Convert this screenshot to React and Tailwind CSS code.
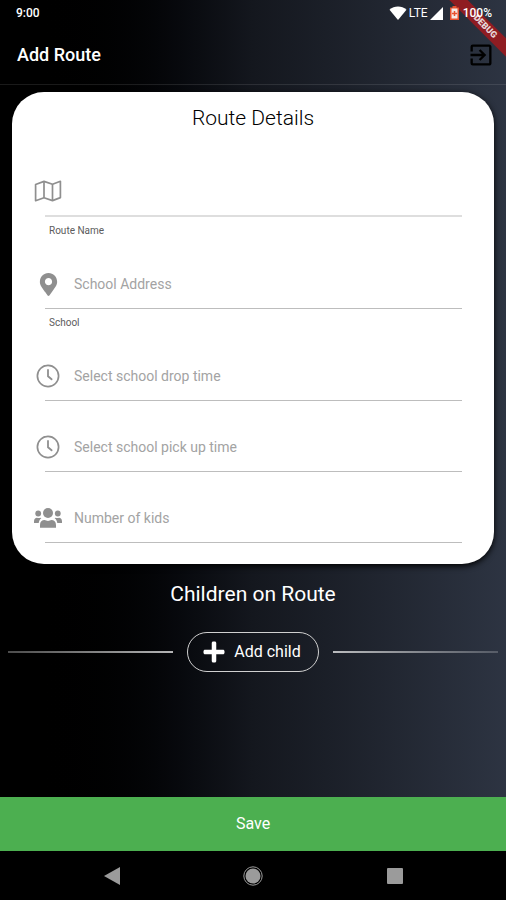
import React, { useState } from 'react'
import { FaMapMarkerAlt, FaPlus } from 'react-icons/fa'
import { MdExitToApp } from 'react-icons/md'

function MapIcon() {
    return (
        <svg width="28" height="22" viewBox="0 0 28 22" fill="none" stroke="currentColor" strokeWidth="1.7" strokeLinejoin="round">
            <path d="M1.600 4.500 10 1.400l8.500 2.900 7.900-3V17.600l-7.900 3-8.500-2.900-8.400 3z" />
            <path d="M10 1.400v16.300M18.500 4.300v16.300" />
        </svg>
    )
}

function ClockIcon() {
    return (
        <svg width="24" height="24" viewBox="0 0 24 24" fill="none" stroke="currentColor">
            <circle cx="12" cy="12" r="10.600" strokeWidth="1.700" />
            <path d="M12 6v6.300l3.600 3" strokeWidth="1.800" strokeLinecap="round" />
        </svg>
    )
}

function PeopleIcon() {
    return (
        <svg width="28" height="22" viewBox="0 0 28 22" fill="currentColor">
            <circle cx="14" cy="6" r="5" />
            <circle cx="4.200" cy="6.500" r="2.900" />
            <circle cx="23.800" cy="6.500" r="2.900" />
            <path d="M6 20.800V18c0-3 2-4.900 4.600-4.900.9.500 2.100.8 3.400.8s2.500-.3 3.400-.8c2.600 0 4.600 1.900 4.600 4.900v2.800z" />
            <path d="M0 16v-1.600C0 12 1.300 10.700 3 10.700c1 .5 2.300.5 3.300 0 .4.100.8.300 1.100.600C5.900 12.300 5 13.900 4.700 16z" />
            <path d="M28 16v-1.600c0-2.400-1.300-3.700-3-3.700-1 .5-2.300.5-3.300 0-.4.100-.8.300-1.100.600 1.500 1 2.400 2.600 2.700 4.700z" />
        </svg>
    )
}

const fields = [
    { name: "routeName", label: "Route Name", placeholder: "", caption: "Route Name", icon: <MapIcon />, active: true },
    { name: "school", label: "School", placeholder: "School Address", caption: "School", icon: <FaMapMarkerAlt size={23} /> },
    { name: "dropTime", label: "Drop time", placeholder: "Select school drop time", icon: <ClockIcon /> },
    { name: "pickTime", label: "Pick up time", placeholder: "Select school pick up time", icon: <ClockIcon /> },
    { name: "kids", label: "Kids", placeholder: "Number of kids", icon: <PeopleIcon /> },
]

function StatusBar() {
    return (
        <div className="relative z-20 flex h-[26px] items-center justify-between pl-4 pr-[14px] text-xs font-medium">
            <span>9:00</span>
            <div className="flex items-center">
                <svg width="18" height="14" viewBox="0 0 18 14" fill="currentColor">
                    <path d="M9 14 0.500 3.800C3 1.600 5.800 0.500 9 0.500s6 1.100 8.500 3.300z" />
                </svg>
                <span className="ml-[2px] font-normal">LTE</span>
                <svg className="ml-[2px]" width="13" height="13" viewBox="0 0 13 13" fill="currentColor">
                    <path d="M13 0v13H0z" />
                </svg>
                <svg className="ml-[7px]" width="9" height="14" viewBox="0 0 9 14">
                    <path d="M2.500 0h4v1.500H9V14H0V1.500h2.500z" fill="#e8502f" />
                    <path d="M1.500 2.500h6v10h-6z" fill="#f4e9e6" />
                    <path d="M4.500 5v5M2 7.500h5" stroke="#e8502f" strokeWidth="1.500" />
                </svg>
                <span className="ml-1">100%</span>
            </div>
        </div>
    )
}

function DebugBanner() {
    return (
        <div className="pointer-events-none absolute right-0 top-0 z-10 h-[60px] w-[60px] overflow-hidden">
            <div className="absolute -right-[27px] top-[18px] h-[13px] w-[100px] rotate-45 bg-[#8f1c22] pl-[6px] text-center text-[9px] font-black leading-[13px] text-[#e6d6d8]">
                DEBUG
            </div>
        </div>
    )
}

function Field({ field, value, onChange }) {
    return (
        <div>
            <div className="flex h-12 items-center">
                <span className="flex w-7 shrink-0 justify-center text-[#8f8f8f]">{field.icon}</span>
                <input
                    id={field.name}
                    aria-label={field.label}
                    value={value}
                    onChange={onChange}
                    placeholder={field.placeholder}
                    className="h-full min-w-0 flex-1 bg-transparent pl-3 text-sm text-black outline-none placeholder:text-[#a3a3a3]"
                />
            </div>
            <div className={field.active ? "ml-[11px] border-t-2 border-[#dedede]" : "ml-[11px] border-t border-[#bdbdbd]"} />
            {field.caption && (
                <label htmlFor={field.name} className="block pl-[15px] pt-[6px] text-[10px] leading-[15px] text-[#5c5c5c]">
                    {field.caption}
                </label>
            )}
        </div>
    )
}

function App() {
    const [values, setValues] = useState({})

    const update = (name) => (e) => setValues({ ...values, [name]: e.target.value })

    return (
        <div className="relative flex min-h-screen flex-col overflow-hidden bg-linear-to-r from-black from-5% via-[#14171e] via-50% to-[#2d3442] font-['Roboto',sans-serif] text-white">
            <StatusBar />
            <DebugBanner />

            <header className="flex h-[59px] items-center justify-between border-b border-white/10 pl-[17px] pr-[11px]">
                <h1 className="text-lg font-medium">Add Route</h1>
                <button type="button" aria-label="Exit" className="text-black">
                    <MdExitToApp size={28} />
                </button>
            </header>

            <main className="flex flex-1 flex-col">
                {/* Route details */}
                <form className="mx-3 mt-[7px] rounded-[32px] bg-white pb-[21px] pl-[22px] pr-8 pt-3 text-black shadow-[0_2px_6px_#000]">
                    <h2 className="ml-[10px] text-center text-[21px] font-light leading-7">Route Details</h2>
                    <div className="mt-[35px] flex flex-col gap-[22px]">
                        {fields.map((field) => (
                            <Field
                                key={field.name}
                                field={field}
                                value={values[field.name] || ""}
                                onChange={update(field.name)}
                            />
                        ))}
                    </div>
                </form>

                {/* Children */}
                <h2 className="mt-4 text-center text-[21px] leading-7">Children on Route</h2>
                <div className="mt-6 flex items-center gap-[14px] px-2">
                    <div className="h-[2px] flex-1 bg-linear-to-r from-white/30 to-white/70" />
                    <button type="button" className="flex h-10 items-center gap-2 rounded-full border border-[#d0d0d0] pl-[14px] pr-[17px] text-base">
                        <FaPlus size={24} />
                        Add child
                    </button>
                    <div className="h-[2px] flex-1 bg-linear-to-r from-white/70 to-white/20" />
                </div>
            </main>

            <button type="button" className="h-[54px] w-full bg-[#4caf50] text-base">Save</button>

            {/* System navigation */}
            <nav className="grid h-[49px] grid-cols-[1fr_60px_1fr] items-center bg-black text-[#9b9b9b]">
                <button type="button" aria-label="Back" className="justify-self-center">
                    <svg width="16" height="18" viewBox="0 0 16 18" fill="currentColor">
                        <path d="M16 0v18L0 9z" />
                    </svg>
                </button>
                <button type="button" aria-label="Home" className="justify-self-center">
                    <svg width="20" height="20" viewBox="0 0 20 20">
                        <circle cx="10" cy="10" r="7.500" fill="currentColor" />
                        <circle cx="10" cy="10" r="9.200" fill="none" stroke="currentColor" />
                    </svg>
                </button>
                <button type="button" aria-label="Recents" className="justify-self-center">
                    <svg width="16" height="16" viewBox="0 0 16 16" fill="currentColor">
                        <rect width="16" height="16" rx="1" />
                    </svg>
                </button>
            </nav>
        </div>
    )
}

export default App
